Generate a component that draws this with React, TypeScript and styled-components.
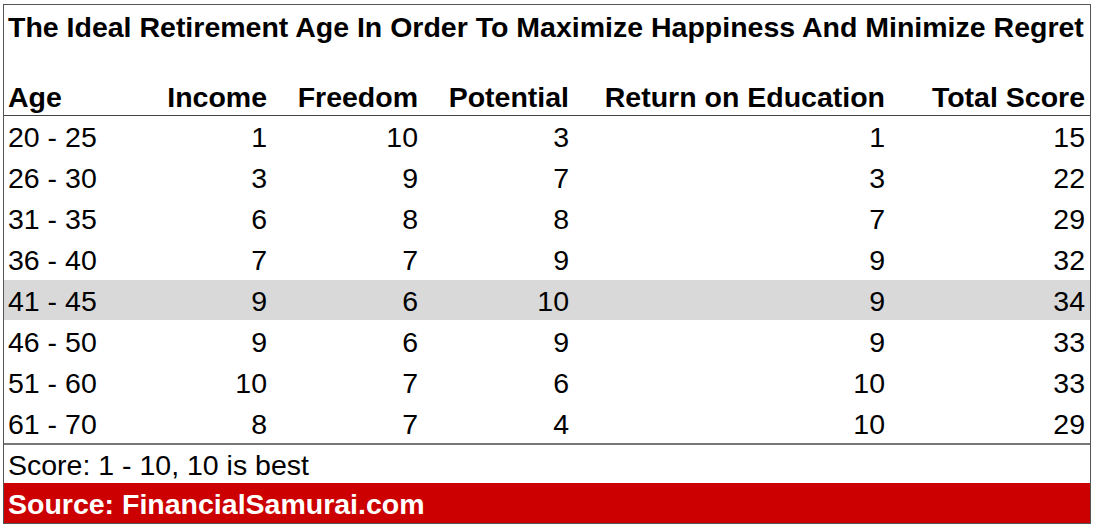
import React from 'react';
import styled, { createGlobalStyle } from 'styled-components';

const GlobalStyle = createGlobalStyle`
  html, body {
    margin: 0;
    padding: 0;
    background: #ffffff;
  }
  body {
    font-family: 'Liberation Sans', Arial, sans-serif;
    color: #000;
  }
`;

const Page = styled.div`
  padding: 4px 5px 5px 3px;
`;

const Sheet = styled.div`
  width: 1088px;
  border: 1px solid #555;
  box-sizing: border-box;
  display: flex;
  flex-direction: column;
`;

const Title = styled.div`
  height: 43px;
  box-sizing: border-box;
  padding: 2px 0 0 4px;
  display: flex;
  align-items: center;
  font-size: 28.5px;
  font-weight: 700;
  white-space: nowrap;
`;

const Spacer = styled.div`
  height: 28px;
`;

const columns = '146px 122px 151px 151px 316px 1fr';

const Row = styled.div<{ $shade?: boolean; $head?: boolean }>`
  display: grid;
  grid-template-columns: ${columns};
  height: ${p => (p.$head ? '40px' : '40.9px')};
  box-sizing: border-box;
  padding-top: 3px;
  align-items: center;
  background: ${p => (p.$shade ? '#d9d9d9' : 'transparent')};
  border-bottom: ${p => (p.$head ? '1px solid #444' : 'none')};
  font-size: 28.5px;
  font-weight: ${p => (p.$head ? 700 : 400)};
`;

const Cell = styled.div<{ $left?: boolean }>`
  text-align: ${p => (p.$left ? 'left' : 'right')};
  padding: ${p => (p.$left ? '0 0 0 4px' : '0 5px 0 0')};
  white-space: nowrap;
`;

const Note = styled.div`
  height: 40px;
  box-sizing: border-box;
  border-top: 2px solid #777;
  padding: 3px 0 0 4px;
  display: flex;
  align-items: center;
  font-size: 28.5px;
`;

const Source = styled.div`
  height: 40px;
  box-sizing: border-box;
  background: #cc0000;
  color: #fff;
  padding: 3px 0 0 4px;
  display: flex;
  align-items: center;
  font-size: 28.5px;
  font-weight: 700;
`;

const headers = ['Age', 'Income', 'Freedom', 'Potential', 'Return on Education', 'Total Score'];

const rows: [string, number, number, number, number, number][] = [
  ['20 - 25', 1, 10, 3, 1, 15],
  ['26 - 30', 3, 9, 7, 3, 22],
  ['31 - 35', 6, 8, 8, 7, 29],
  ['36 - 40', 7, 7, 9, 9, 32],
  ['41 - 45', 9, 6, 10, 9, 34],
  ['46 - 50', 9, 6, 9, 9, 33],
  ['51 - 60', 10, 7, 6, 10, 33],
  ['61 - 70', 8, 7, 4, 10, 29],
];

const App: React.FC = () => {
  return (
    <Page>
      <GlobalStyle />
      <Sheet>
        <Title>The Ideal Retirement Age In Order To Maximize Happiness And Minimize Regret</Title>
        <Spacer />
        <Row $head>
          {headers.map((h, i) => (
            <Cell key={h} $left={i === 0}>{h}</Cell>
          ))}
        </Row>
        {rows.map(r => (
          <Row key={r[0]} $shade={r[0] === '41 - 45'}>
            {r.map((v, i) => (
              <Cell key={i} $left={i === 0}>{v}</Cell>
            ))}
          </Row>
        ))}
        <Note>Score: 1 - 10, 10 is best</Note>
        <Source>Source: FinancialSamurai.com</Source>
      </Sheet>
    </Page>
  );
};

export default App;
